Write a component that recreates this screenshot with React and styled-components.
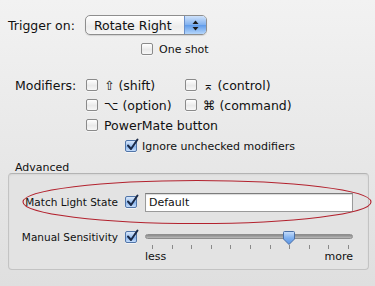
import React from 'react';
import styled, { createGlobalStyle } from 'styled-components';

const GlobalStyle = createGlobalStyle`
  html, body {
    margin: 0;
    padding: 0;
  }
  body {
    font-family: "DejaVu Sans", "Liberation Sans", sans-serif;
    color: #111;
  }
`;

const Window = styled.div`
  width: 375px;
  height: 286px;
  box-sizing: border-box;
  padding: 15px 6px 0 8px;
  background: linear-gradient(#f2f2f2, #dfdfdf);
  overflow: hidden;
`;

const TriggerRow = styled.div`
  display: flex;
  align-items: center;
  gap: 10px;
  height: 20px;
`;

const BigLabel = styled.span`
  font-size: 12.5px;
  white-space: nowrap;
`;

const SmallLabel = styled.span`
  font-size: 11px;
  white-space: nowrap;
`;

const Popup = styled.div`
  display: flex;
  align-items: center;
  width: 122px;
  height: 20px;
  box-sizing: border-box;
  border: 1px solid #8e8e8e;
  border-radius: 5px;
  background: linear-gradient(#ffffff, #ececec 60%, #f6f6f6);
  box-shadow: 0 1px 1px rgba(0, 0, 0, 0.12);
  overflow: hidden;
  font-size: 12.5px;
  padding-left: 8px;
`;

const PopupText = styled.span`
  flex: 1;
`;

const Stepper = styled.div`
  width: 21px;
  height: 100%;
  border-left: 1px solid #6a8fc8;
  background: linear-gradient(#cfe2fb, #7fb0ef 50%, #5f9bea 51%, #b5d6fb);
  display: flex;
  align-items: center;
  justify-content: center;
`;

const CheckRow = styled.label`
  display: flex;
  align-items: center;
  gap: ${({ $gap }) => $gap || 6}px;
  margin-left: ${({ $indent }) => $indent || 0}px;
  margin-top: ${({ $mt }) => $mt || 0}px;
  height: ${({ $h }) => $h || 20}px;
`;

const Box = styled.span`
  width: 12px;
  height: 12px;
  flex: none;
  box-sizing: border-box;
  border: 1px solid ${({ $on }) => ($on ? '#5175a8' : '#8a8a8a')};
  border-radius: 2px;
  background: ${({ $on }) =>
    $on
      ? 'linear-gradient(#d7e6fa, #9fc3f0 50%, #86b3ee 51%, #c4dcfa)'
      : 'linear-gradient(#ffffff, #eaeaea 55%, #f7f7f7)'};
  box-shadow: 0 1px 0 rgba(255, 255, 255, 0.6);
  position: relative;
`;

const Check = ({ on }) => (
  <Box $on={on}>
    {on && (
      <svg
        width="14"
        height="14"
        viewBox="0 0 14 14"
        style={{ position: 'absolute', left: -1, top: -3 }}
      >
        <path d="M3 7.5 L6 11 L12.5 1.5" fill="none" stroke="#1a2a48" strokeWidth="2" strokeLinecap="round" strokeLinejoin="round" />
      </svg>
    )}
  </Box>
);

const ModSection = styled.div`
  display: flex;
  margin-top: 15px;
  margin-left: 7px;
`;

const ModLabel = styled(BigLabel)`
  width: 71px;
  line-height: 20px;
  margin-top: 1px;
`;

const ModGrid = styled.div`
  display: grid;
  grid-template-columns: 99px auto;
  grid-auto-rows: 20px;
`;

const Wide = styled.div`
  grid-column: 1 / span 2;
`;

const SectionTitle = styled.div`
  font-size: 11px;
  line-height: 13px;
  margin: 6px 0 0 7px;
`;

const Group = styled.div`
  width: 361px;
  height: 97px;
  box-sizing: border-box;
  border: 1px solid #c3c3c3;
  border-top-color: #b3b3b3;
  border-radius: 4px;
  background: #e3e3e3;
  box-shadow: inset 0 1px 2px rgba(0, 0, 0, 0.06);
  padding-top: 17px;
  margin-top: -1px;
`;

const FieldRow = styled.div`
  position: relative;
  display: grid;
  grid-template-columns: 116px 20px 208px;
  align-items: ${({ $top }) => ($top ? 'start' : 'center')};
  height: ${({ $h }) => $h || 22}px;
  margin-bottom: ${({ $mb }) => $mb || 0}px;
`;

const RowLabel = styled.span`
  font-size: 10.5px;
  line-height: 14px;
  white-space: nowrap;
  text-align: right;
  padding-right: 7px;
`;

const BoxSlot = styled.span`
  display: flex;
  padding-top: ${({ $pt }) => $pt || 0}px;
`;

const TextField = styled.div`
  height: 19px;
  box-sizing: border-box;
  border: 1px solid #9a9a9a;
  border-top-color: #7c7c7c;
  background: #fff;
  box-shadow: inset 0 1px 1px rgba(0, 0, 0, 0.15);
  font-size: 11px;
  line-height: 17px;
  padding-left: 3px;
`;

const Ellipse = styled.svg`
  position: absolute;
  left: 13px;
  top: -12px;
  pointer-events: none;
`;

const SliderWrap = styled.div`
  display: flex;
  flex-direction: column;
  padding-top: 4px;
`;

const Track = styled.div`
  position: relative;
  height: 5px;
  border-radius: 3px;
  background: linear-gradient(#8a8a8a, #b9b9b9);
  border: 1px solid #8d8d8d;
  box-sizing: border-box;
`;

const Thumb = styled.svg`
  position: absolute;
  top: -4px;
`;

const Ticks = styled.div`
  display: flex;
  justify-content: space-between;
  padding: 6px 4px 0 7px;
`;

const Tick = styled.span`
  width: 1px;
  height: 4px;
  background: #8a8a8a;
`;

const Ends = styled.div`
  display: flex;
  justify-content: space-between;
  font-size: 11px;
  line-height: 13px;
  margin-top: 1px;
`;

const App = () => {
  const ticks = Array.from({ length: 11 });
  return (
    <Window>
      <GlobalStyle />
      <TriggerRow>
        <BigLabel>Trigger on:</BigLabel>
        <Popup>
          <PopupText>Rotate Right</PopupText>
          <Stepper>
            <svg width="7" height="11" viewBox="0 0 7 11">
              <path d="M3.5 0.5 L6.5 4 L0.5 4 Z" fill="#1c1c1c" />
              <path d="M3.5 10.5 L6.5 7 L0.5 7 Z" fill="#1c1c1c" />
            </svg>
          </Stepper>
        </Popup>
      </TriggerRow>
      <CheckRow $indent={133} $h={22} $mt={3}>
        <Check />
        <SmallLabel>One shot</SmallLabel>
      </CheckRow>

      <ModSection>
        <ModLabel>Modifiers:</ModLabel>
        <ModGrid>
          <CheckRow>
            <Check />
            <BigLabel>⇧ (shift)</BigLabel>
          </CheckRow>
          <CheckRow>
            <Check />
            <BigLabel>⌅ (control)</BigLabel>
          </CheckRow>
          <CheckRow>
            <Check />
            <BigLabel>⌥ (option)</BigLabel>
          </CheckRow>
          <CheckRow>
            <Check />
            <BigLabel>⌘ (command)</BigLabel>
          </CheckRow>
          <Wide>
            <CheckRow>
              <Check />
              <BigLabel>PowerMate button</BigLabel>
            </CheckRow>
          </Wide>
          <Wide>
            <CheckRow $indent={39} $gap={5} $h={22}>
              <Check on />
              <SmallLabel>Ignore unchecked modifiers</SmallLabel>
            </CheckRow>
          </Wide>
        </ModGrid>
      </ModSection>

      <SectionTitle>Advanced</SectionTitle>
      <Group>
        <FieldRow $mb={17}>
          <RowLabel>Match Light State</RowLabel>
          <BoxSlot>
            <Check on />
          </BoxSlot>
          <TextField>Default</TextField>
          <Ellipse width="352" height="46" viewBox="0 0 352 46">
            <ellipse cx="175" cy="23" rx="174" ry="21.5" fill="none" stroke="#b3222e" strokeWidth="1.1" />
          </Ellipse>
        </FieldRow>
        <FieldRow $top $h={40}>
          <RowLabel>Manual Sensitivity</RowLabel>
          <BoxSlot $pt={1}>
            <Check on />
          </BoxSlot>
          <SliderWrap>
            <Track>
              <Thumb width="12" height="14" viewBox="0 0 12 14" style={{ left: 137 }}>
                <defs>
                  <linearGradient id="tg" x1="0" y1="0" x2="0" y2="1">
                    <stop offset="0" stopColor="#c9defa" />
                    <stop offset="0.5" stopColor="#7fb0ef" />
                    <stop offset="1" stopColor="#5a93e2" />
                  </linearGradient>
                </defs>
                <path d="M1.5 0.5 H10.5 Q11.5 0.5 11.5 1.5 V8 L6 13.5 L0.5 8 V1.5 Q0.5 0.5 1.5 0.5 Z" fill="url(#tg)" stroke="#4a6fa5" />
              </Thumb>
            </Track>
            <Ticks>
              {ticks.map((_, i) => (
                <Tick key={i} />
              ))}
            </Ticks>
            <Ends>
              <span>less</span>
              <span>more</span>
            </Ends>
          </SliderWrap>
        </FieldRow>
      </Group>
    </Window>
  );
};

export default App;
